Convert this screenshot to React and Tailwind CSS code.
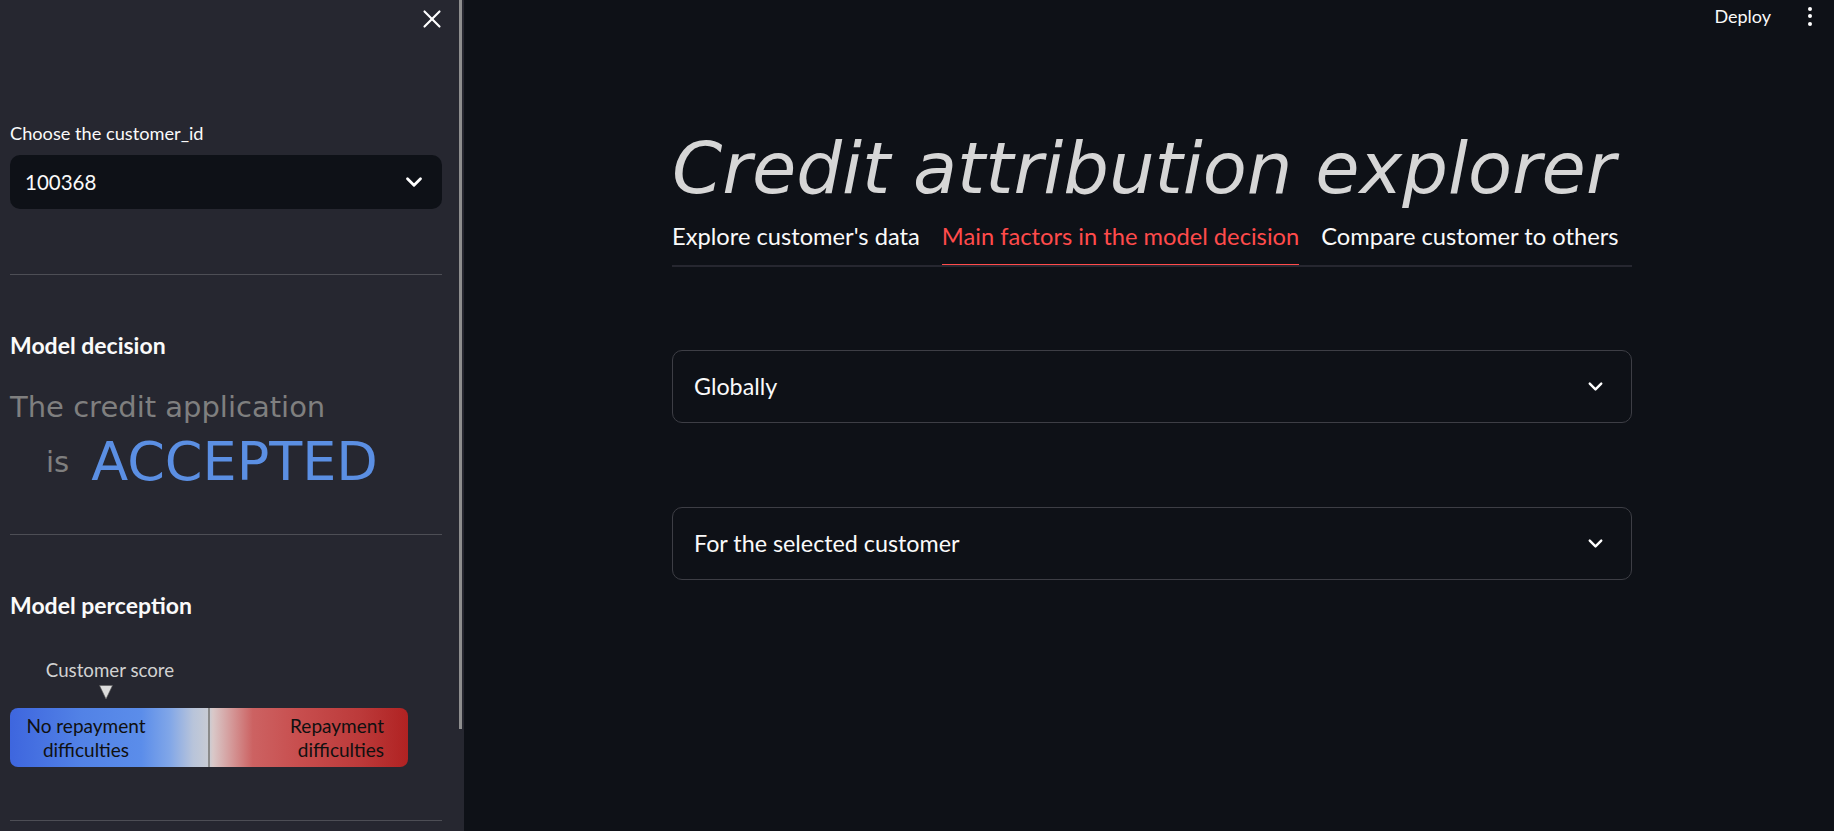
import { ChevronDown, X } from "lucide-react";

const SANS = "font-['Lato','Noto_Sans',sans-serif]";
const DEJAVU = "font-['DejaVu_Sans',sans-serif]";

const TABS = [
  { label: "Explore customer's data", active: false },
  { label: "Main factors in the model decision", active: true },
  { label: "Compare customer to others", active: false }
];

const EXPANDERS = ["Globally", "For the selected customer"];

function Divider() {
  return <div className="h-px w-full bg-[#4d4e55]" />;
}

function ScoreBar() {
  return (
    <div className="flex flex-col">
      <div className="flex w-[200px] flex-col items-center">
        <p className="text-[18.7px] leading-[24px] text-[#d2d2d2]">Customer score</p>
        <svg width="16" height="16" viewBox="0 0 16 16" className="mt-[2px] -ml-[8px]">
          <path d="M1.5 1.5 L14.5 1.5 L8 15 Z" fill="#dcdcdc" stroke="#5a5a5a" strokeWidth="0.6" />
        </svg>
      </div>
      <div className="relative mt-[8px] flex h-[59px] w-[398px] items-center overflow-hidden rounded-[8px] bg-[linear-gradient(90deg,#3e66de_0%,#5282e6_18%,#5b8dea_33%,#80a6e8_40%,#b8c4da_46%,#c9ccd4_50%,#d9c8c8_51%,#d49595_56%,#cc6262_61%,#c84f4f_72%,#bc3a3a_88%,#b02222_100%)]">
        <div className="absolute left-[198px] top-0 h-full w-[2px] bg-[#8a8a8a]" />
        <div className="w-[152px] text-center text-[19px] leading-[24px] text-[#101010]">
          No repayment
          <br />
          difficulties
        </div>
        <div className="ml-auto pr-[24px] text-right text-[19px] leading-[24px] text-[#101010]">
          Repayment
          <br />
          difficulties
        </div>
      </div>
    </div>
  );
}

function Sidebar() {
  return (
    <aside className="relative flex h-full w-[464px] shrink-0 flex-col bg-[#262730] pl-[10px] pr-[22px]">
      <div className="absolute right-[2px] top-0 h-[729px] w-[3px] bg-[#8e8e8e]" />
      <div className="-mr-[5px] flex h-[38px] items-center justify-end">
        <X size={30} strokeWidth={1.7} className="text-white" />
      </div>

      <p className="mt-[83px] text-[18.2px] leading-[24px] text-[#fafafa]">Choose the customer_id</p>
      <div className="mt-[10px] flex h-[54px] items-center justify-between rounded-[10px] bg-[#0e1117] pl-[15px] pr-[15px]">
        <span className="text-[20.5px] text-[#fafafa]">100368</span>
        <ChevronDown size={26} strokeWidth={2.6} className="text-white" />
      </div>

      <div className="mt-[65px]">
        <Divider />
      </div>

      <h3 className="mt-[55px] text-[23px] font-bold leading-[30px] text-[#fafafa]">Model decision</h3>
      <div className={`mt-[30px] ${DEJAVU}`}>
        <p className="text-[29px] leading-[34px] text-[#7f7f7f]">The credit application</p>
        <div className="mt-[7px] flex h-[62px] items-center">
          <span className="ml-[36px] text-[29px] leading-[34px] text-[#7f7f7f]">is</span>
          <span className="ml-[22px] text-[54px] leading-[62px] text-[#5b8fe3]">ACCEPTED</span>
        </div>
      </div>

      <div className="mt-[41px]">
        <Divider />
      </div>

      <h3 className="mt-[55px] text-[23px] font-bold leading-[30px] text-[#fafafa]">Model perception</h3>
      <div className="mt-[38px]">
        <ScoreBar />
      </div>

      <div className="mt-[53px]">
        <Divider />
      </div>
    </aside>
  );
}

function Expander({ label }) {
  return (
    <div className="flex h-[73px] items-center justify-between rounded-[10px] border border-[#3d3e45] pl-[21px] pr-[24px]">
      <span className="text-[23.3px] text-[#fafafa]">{label}</span>
      <ChevronDown size={23} strokeWidth={2.5} className="text-white" />
    </div>
  );
}

export default function App() {
  return (
    <div className={`flex h-[831px] w-full overflow-hidden bg-[#0e1117] ${SANS}`}>
      <Sidebar />

      <main className="relative flex flex-1 flex-col">
        <div className="flex h-[32px] items-center justify-end gap-[37px] pr-[22px]">
          <span className="text-[18px] text-[#fafafa]">Deploy</span>
          <div className="flex flex-col gap-[3.5px]">
            <span className="h-[4px] w-[4px] rounded-full bg-white" />
            <span className="h-[4px] w-[4px] rounded-full bg-white" />
            <span className="h-[4px] w-[4px] rounded-full bg-white" />
          </div>
        </div>

        <div className="ml-[208px] mt-[94px] w-[960px]">
          <h1 className={`${DEJAVU} text-[72px] italic leading-[84px] text-[#d6d6d6]`}>
            Credit attribution explorer
          </h1>

          <div className="relative mt-[12px]">
            <div className="flex gap-[22px]">
              {TABS.map((tab) => (
                <div
                  key={tab.label}
                  className={`pb-[14px] text-[23.7px] leading-[28px] ${
                    tab.active ? "border-b-[3px] border-[#ff4b4b] text-[#ff4b4b]" : "border-b-[3px] border-transparent text-[#fafafa]"
                  }`}
                >
                  {tab.label}
                </div>
              ))}
            </div>
            <div className="absolute bottom-0 left-0 h-[2px] w-full bg-[#262730]" />
          </div>

          <div className="mt-[83px] flex flex-col gap-[84px]">
            {EXPANDERS.map((label) => (
              <Expander key={label} label={label} />
            ))}
          </div>
        </div>
      </main>
    </div>
  );
}
